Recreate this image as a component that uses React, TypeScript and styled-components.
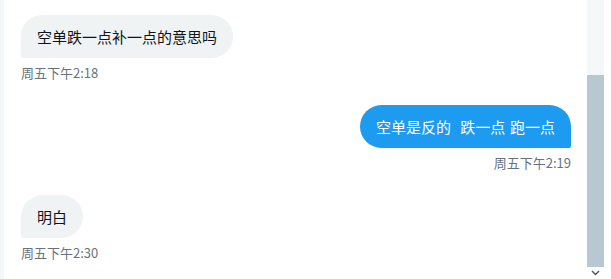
import React from "react";
import styled, { createGlobalStyle } from "styled-components";

const GlobalStyle = createGlobalStyle`
  html, body {
    margin: 0;
    padding: 0;
    background: #ffffff;
  }
  body {
    font-family: "Noto Sans CJK SC", "Liberation Sans", sans-serif;
  }
`;

const Frame = styled.div`
  width: 611px;
  height: 279px;
  display: flex;
  overflow: hidden;
  background: #ffffff;
`;

const SideRail = styled.div`
  width: 4px;
  background: #f5f8f8;
  flex-shrink: 0;
`;

const Thread = styled.div`
  flex: 1;
  display: flex;
  flex-direction: column;
  padding: 15px 16px 0 17px;
  gap: 23px;
`;

type SideProps = { $mine?: boolean };

const Message = styled.div<SideProps>`
  display: flex;
  flex-direction: column;
  align-items: ${(p) => (p.$mine ? "flex-end" : "flex-start")};
`;

const Bubble = styled.div<SideProps>`
  font-size: 15px;
  line-height: 21px;
  padding: 11px 16px;
  white-space: pre;
  word-spacing: ${(p) => (p.$mine ? "1.3px" : "0")};
  color: ${(p) => (p.$mine ? "#ffffff" : "#0f1419")};
  background: ${(p) => (p.$mine ? "#1d9bf0" : "#eff3f4")};
  border-radius: ${(p) => (p.$mine ? "22px 22px 2px 22px" : "22px 22px 22px 2px")};
`;

const Stamp = styled.div`
  margin-top: 6px;
  font-size: 13px;
  line-height: 18px;
  color: #66737e;
`;

const Scrollbar = styled.div`
  width: 17px;
  margin-right: 7px;
  flex-shrink: 0;
  background: #f5f8f8;
  display: flex;
  flex-direction: column;
`;

const Track = styled.div`
  flex: 1;
  display: flex;
  flex-direction: column;
  padding-top: 75px;
`;

const Thumb = styled.div`
  flex: 1;
  background: #b8c8d1;
`;

const ArrowDown = styled.div`
  height: 12px;
  display: flex;
  align-items: center;
  justify-content: center;
  background: #ffffff;
`;

const messages = [
  { text: "空单跌一点补一点的意思吗", time: "周五下午2:18", mine: false },
  { text: "空单是反的  跌一点 跑一点", time: "周五下午2:19", mine: true },
  { text: "明白", time: "周五下午2:30", mine: false },
];

export default function App() {
  return (
    <>
      <GlobalStyle />
      <Frame>
        <SideRail />
        <Thread>
          {messages.map((m) => (
            <Message key={m.time} $mine={m.mine}>
              <Bubble $mine={m.mine}>{m.text}</Bubble>
              <Stamp>{m.time}</Stamp>
            </Message>
          ))}
        </Thread>
        <Scrollbar>
          <Track>
            <Thumb />
          </Track>
          <ArrowDown>
            <svg width="9" height="6" viewBox="0 0 9 6">
              <path d="M1 1 L4.5 4.5 L8 1" fill="none" stroke="#505050" strokeWidth="1.4" />
            </svg>
          </ArrowDown>
        </Scrollbar>
      </Frame>
    </>
  );
}
